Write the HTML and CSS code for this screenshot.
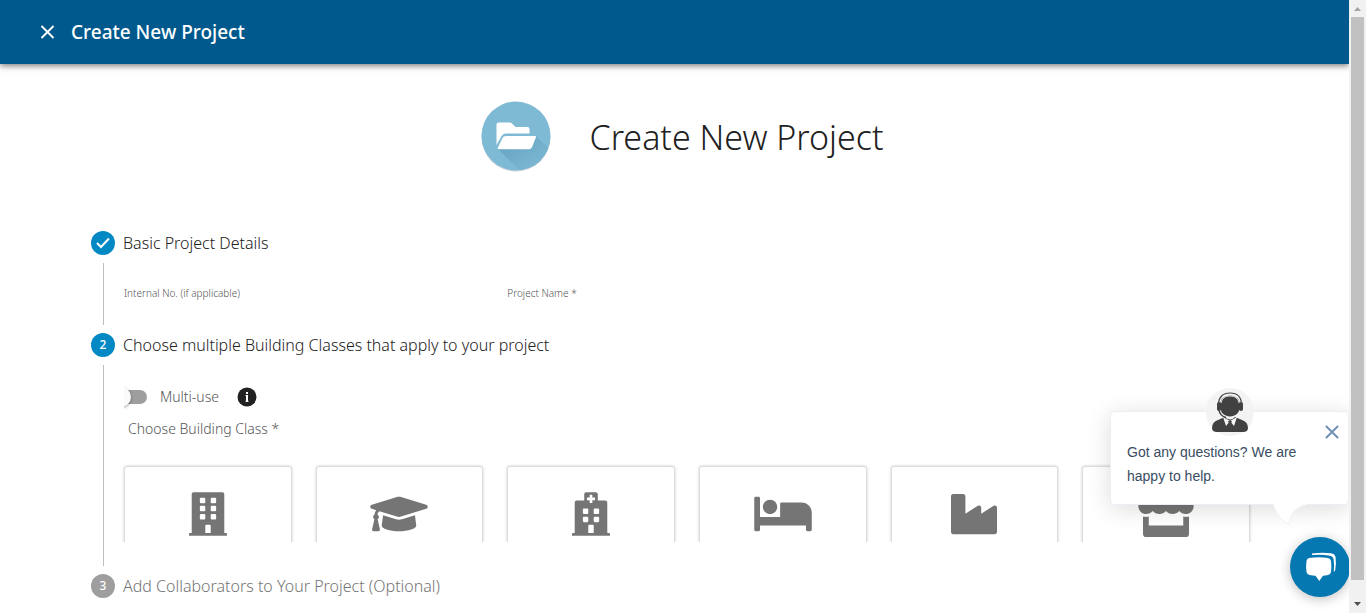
FILE: index.html
```html
<!DOCTYPE html>
<html lang="en">
<head>
<meta charset="utf-8">
<meta name="viewport" content="width=device-width, initial-scale=1">
<title>Create New Project</title>
<link rel="stylesheet" href="styles.css">
</head>
<body>
<div class="app">
  <div class="page">
    <header class="topbar">
      <button class="icon-button" type="button" aria-label="Close">
        <svg width="16" height="16" viewBox="0 0 16 16"><path d="M1.500 2l12 12M13.500 2l-12 12" stroke="#fff" stroke-width="1.800" fill="none"/></svg>
      </button>
      <span class="topbar-title">Create New Project</span>
    </header>

    <main class="content">
      <div class="hero">
        <svg class="hero-icon" width="70" height="72" viewBox="0 0 70 72" aria-hidden="true">
          <defs>
            <clipPath id="disc"><circle cx="35" cy="35" r="34.5"/></clipPath>
            <linearGradient id="shade" x1="0.2" y1="0.2" x2="0.75" y2="0.75"><stop offset="0" stop-color="#68a7c4"/><stop offset="1" stop-color="#7fbad5"/></linearGradient>
          </defs>
          <circle cx="35" cy="36" r="34.500" fill="#cbd3d7"/>
          <circle cx="35" cy="35" r="34.500" fill="#7fbad5"/>
          <path d="M17 48L45 76H82V62L55 35z" fill="url(#shade)" clip-path="url(#disc)"/>
          <path d="M15.500 44V23.500q0-2 2-2h11q1.500 0 2.500 1l3.500 3.500h12q2 0 2 2v4.500H25q-2.500 0-4 2z" fill="#fff"/>
          <path d="M25 35h29q1.500 0 1 1.300l-4 10q-.8 2-3 2H18q-2 0-1.200-1.600l4.700-9.700q1-2 3.500-2z" fill="#fff"/>
        </svg>
        <h1 class="hero-title">Create New Project</h1>
      </div>

      <ol class="stepper">
        <li class="step">
          <div class="step-head">
            <span class="badge"><svg width="14" height="12" viewBox="0 0 14 12"><path d="M1 6l4 4 8-8.500" stroke="#fff" stroke-width="2" fill="none"/></svg></span>
            <h2 class="step-title">Basic Project Details</h2>
          </div>
          <div class="step-body">
            <div class="fields">
              <div class="field"><label for="internal-no">Internal No. (if applicable)</label><input id="internal-no" type="text"></div>
              <div class="field"><label for="project-name">Project Name *</label><input id="project-name" type="text" required></div>
            </div>
          </div>
        </li>
        <li class="step">
          <div class="step-head">
            <span class="badge">2</span>
            <h2 class="step-title">Choose multiple Building Classes that apply to your project</h2>
          </div>
          <div class="step-body">
            <div class="options">
              <span class="switch"><input id="multi-use" type="checkbox" role="switch"></span>
              <label class="option-label" for="multi-use">Multi-use</label>
              <button class="icon-button" type="button" aria-label="About multi-use">
                <svg width="20" height="20" viewBox="0 0 20 20"><circle cx="10" cy="10" r="9.500" fill="#212121"/><rect x="9" y="5" width="2" height="2" fill="#fff"/><path d="M8.500 8.500H10V14M8.500 14.300h3" stroke="#fff" stroke-width="1" fill="none"/><rect x="9" y="8" width="2" height="6.500" fill="#fff"/></svg>
              </button>
            </div>
            <p class="cards-label" id="cards-label">Choose Building Class *</p>
            <div class="cards" role="group" aria-labelledby="cards-label">
              <button class="card" type="button" aria-label="Office">
                <svg width="38" height="44" viewBox="0 0 448 512"><path fill-rule="evenodd" d="M436 480h-20V24c0-13-11-24-24-24H56C43 0 32 11 32 24v456H12c-7 0-12 5-12 12v20h448v-20c0-7-5-12-12-12zM128 76q0-12 12-12h40q12 0 12 12v40q0 12-12 12h-40q-12 0-12-12zm128 0q0-12 12-12h40q12 0 12 12v40q0 12-12 12h-40q-12 0-12-12zM128 172q0-12 12-12h40q12 0 12 12v40q0 12-12 12h-40q-12 0-12-12zm128 0q0-12 12-12h40q12 0 12 12v40q0 12-12 12h-40q-12 0-12-12zM128 268q0-12 12-12h40q12 0 12 12v40q0 12-12 12h-40q-12 0-12-12zm128 0q0-12 12-12h40q12 0 12 12v40q0 12-12 12h-40q-12 0-12-12zM192 396q0-12 12-12h40q12 0 12 12v84h-64z"/></svg>
              </button>
              <button class="card" type="button" aria-label="Education">
                <svg width="58" height="46" viewBox="0 0 640 512"><path d="M622.340 153.200L343.400 67.500c-15.200-4.670-31.600-4.670-46.790 0L17.660 153.200c-23.540 7.230-23.540 38.360 0 45.590l48.630 14.940c-10.670 13.190-17.230 29.280-17.880 46.900C38.780 266.150 32 276.110 32 288c0 10.780 5.680 19.850 13.860 25.650L20.330 428.530C18.110 438.520 25.710 448 35.940 448h56.110c10.240 0 17.840-9.480 15.620-19.470L82.140 313.650C90.320 307.850 96 298.780 96 288c0-11.570-6.470-21.250-15.660-26.870.76-15.020 8.440-28.300 20.690-36.720L296.600 284.500c9.060 2.780 26.440 6.250 46.790 0l278.950-85.700c23.550-7.240 23.550-38.360 0-45.600zM352.790 315.090c-28.530 8.760-52.840 3.920-65.590 0l-145.020-44.550L128 384c0 35.350 85.960 64 192 64s192-28.650 192-64l-14.180-113.470-145.030 44.560z"/></svg>
              </button>
              <button class="card" type="button" aria-label="Health care">
                <svg width="38" height="44" viewBox="0 0 448 512"><path fill-rule="evenodd" d="M448 492v20H0v-20q0-12 12-12h20V120q0-24 24-24h88V24q0-24 24-24h112q24 0 24 24v72h88q24 0 24 24v360h20q12 0 12 12zM128 204q0-12 12-12h40q12 0 12 12v40q0 12-12 12h-40q-12 0-12-12zm128 0q0-12 12-12h40q12 0 12 12v40q0 12-12 12h-40q-12 0-12-12zM128 300q0-12 12-12h40q12 0 12 12v40q0 12-12 12h-40q-12 0-12-12zm128 0q0-12 12-12h40q12 0 12 12v40q0 12-12 12h-40q-12 0-12-12zM192 396q0-12 12-12h40q12 0 12 12v84h-64zM182 94h26v26q0 6 6 6h20q6 0 6-6V94h26q6 0 6-6V68q0-6-6-6h-26V36q0-6-6-6h-20q-6 0-6 6v26h-26q-6 0-6 6v20q0 6 6 6z"/></svg>
              </button>
              <button class="card" type="button" aria-label="Lodging">
                <svg width="58" height="46" viewBox="0 0 640 512"><path d="M176 256c44 0 80-36 80-80s-36-80-80-80-80 36-80 80 36 80 80 80zm352-128H304c-9 0-16 7-16 16v144H64V80c0-9-7-16-16-16H16C7 64 0 71 0 80v352c0 9 7 16 16 16h32c9 0 16-7 16-16v-48h512v48c0 9 7 16 16 16h32c9 0 16-7 16-16V240c0-62-50-112-112-112z"/></svg>
              </button>
              <button class="card" type="button" aria-label="Industrial">
                <svg width="46" height="46" viewBox="0 0 512 512"><path d="M475 164L336 252v-68c0-19-21-30-37-20L160 252V56c0-13-11-24-24-24H24C11 32 0 43 0 56v400c0 13 11 24 24 24h464c13 0 24-11 24-24V184c0-19-21-30-37-20z"/></svg>
              </button>
              <button class="card" type="button" aria-label="Retail">
                <svg width="56" height="46" viewBox="0 0 616 512"><path d="M602 118.600L537.100 15C531.300 5.700 521 0 510 0H106C95 0 84.700 5.700 78.900 15L14 118.600c-33.500 53.500-3.800 127.900 58.800 136.400 4.500.6 9.100.9 13.700.9 29.600 0 55.800-13 73.800-33.100 18 20.100 44.300 33.100 73.800 33.100 29.600 0 55.800-13 73.800-33.100 18 20.100 44.300 33.100 73.800 33.100 29.600 0 55.800-13 73.800-33.100 18.100 20.100 44.300 33.100 73.800 33.100 4.700 0 9.200-.3 13.700-.9 62.800-8.400 92.600-82.800 59-136.400zM529.500 288c-10 0-19.900-1.500-29.500-3.800V384H116v-99.800c-9.600 2.200-19.500 3.800-29.500 3.800-6 0-12.100-.4-18-1.200-5.600-.8-11.100-2.100-16.400-3.600V480c0 17.700 14.300 32 32 32h448c17.700 0 32-14.300 32-32V283.200c-5.400 1.600-10.800 2.900-16.400 3.600-6.100.8-12.100 1.200-18.200 1.200z"/></svg>
              </button>
            </div>
          </div>
        </li>
        <li class="step step-pending">
          <div class="step-head">
            <span class="badge">3</span>
            <h2 class="step-title">Add Collaborators to Your Project (Optional)</h2>
          </div>
        </li>
      </ol>
    </main>

    <aside class="chat">
      <div class="chat-popup">
        <svg class="chat-avatar" width="48" height="48" viewBox="0 0 48 48" aria-hidden="true">
          <circle cx="24" cy="24" r="24" fill="#f3f3f3"/>
          <path d="M6 40q0-6 6-8l7-3q5 5 10 0l7 3q6 2 6 8 0 4-5 4H11q-5 0-5-4z" fill="#414141"/>
          <path d="M17 29l3 9 4-5 4 5 3-9-7 4z" fill="#f6f6f6"/><path d="M22 33h4l-1 2 2 7h-6l2-7z" fill="#414141"/>
          <path d="M14 18C14 11 18 7.500 24 7.500S34 11 34 18 29 28.500 24 28.500 14 25 14 18z" fill="#414141"/>
          <path d="M12.500 17C12.500 9 17 5 24 5s11.500 4 11.500 12" stroke="#414141" stroke-width="1.200" fill="none"/>
          <path d="M15 15C16 10 19 8 24 8s8 2 9 7" stroke="#eee" stroke-width="1" fill="none"/>
          <rect x="11" y="14" width="4" height="9" rx="2" fill="#414141"/><rect x="33" y="14" width="4" height="9" rx="2" fill="#414141"/>
          <path d="M13 22q1 6 7 7.500" stroke="#414141" stroke-width="1.500" fill="none"/>
        </svg>
        <p class="chat-text">Got any questions? We are happy to help.</p>
        <button class="icon-button chat-close" type="button" aria-label="Dismiss">
          <svg width="14" height="14" viewBox="0 0 14 14"><path d="M1.500 1.500l11 11M12.500 1.500l-11 11" stroke="#7190b7" stroke-width="2" stroke-linecap="round" fill="none"/></svg>
        </button>
        <svg class="chat-tail" width="36" height="22" viewBox="0 0 36 22" aria-hidden="true"><path d="M0 0q4 14 16 21 0-17 20-21z" fill="#fff"/><path d="M0 0q4 14 16 21 0-17 20-21" fill="none" stroke="#f0f0f3"/></svg>
      </div>
      <button class="chat-open" type="button" aria-label="Open chat">
        <svg width="34" height="32" viewBox="1 1 34 32"><path d="M7 8q10-1.600 19 0 2.500.4 3 3 .8 6 0 11-.5 2.600-3 3-2.500.5-5 .7L17.300 31l-3.800-5.200q-3-.2-6-.8-2.500-.4-3-3-.8-5.500 0-11 .4-2.600 2.500-3z" fill="#fff"/><path d="M10 3.500q10-1.500 19-.3 4 .6 4.600 4 .8 6.800-.4 12.800-.3 1.500-1.500 1.800.8-6.300-.1-12.300-.5-3.200-3.500-3.800-8-1.400-18.100-.6z" fill="#fff"/></svg>
      </button>
    </aside>
  </div>

  <div class="scrollbar" aria-hidden="true">
    <svg width="17" height="17" viewBox="0 0 17 17"><path d="M5 11h7L8.500 7z" fill="#a3a3a3"/></svg>
    <div class="scroll-thumb"></div>
    <svg width="17" height="17" viewBox="0 0 17 17"><path d="M5 6h7l-3.500 4z" fill="#505050"/></svg>
  </div>
</div>
</body>
</html>
```
FILE: styles.css
```css
* { box-sizing: border-box; }
body { margin: 0; background: #fff; color: #212121; font-family: "Noto Sans", "Open Sans", sans-serif; }
button { font: inherit; }
h1, h2, p, ol { margin: 0; padding: 0; }
svg { display: block; flex: none; }

.app { display: grid; grid-template-columns: minmax(0, 1fr) 17px; height: 100vh; overflow: hidden; }
.page { position: relative; display: flex; flex-direction: column; min-height: 0; overflow: hidden; }

.icon-button { display: flex; padding: 0; border: 0; background: none; cursor: pointer; }

.topbar { display: flex; align-items: center; gap: 15px; padding: 16px 40px; background: #00598c; color: #fff; box-shadow: 0 2px 6px rgba(0, 0, 0, .5); }
.topbar-title { font-size: 19px; line-height: 32px; font-weight: 500; }

.content { flex: 1; min-height: 0; }
.hero { display: flex; justify-content: center; align-items: center; gap: 38px; padding: 37px 0 58px; margin-right: -16px; }
.hero-title { font-size: 34px; line-height: 48px; font-weight: 300; }

.stepper { list-style: none; padding: 0 99px 0 91px; }
.step-head { display: flex; align-items: center; gap: 8px; line-height: 24px; }
.badge { display: flex; align-items: center; justify-content: center; width: 24px; height: 24px; border-radius: 50%; background: #0288c3; color: #fff; font-size: 12px; font-weight: 500; }
.step-title { font-size: 16px; font-weight: 300; }
.step-body { margin: 8px 0 8px 12px; padding-left: 20px; border-left: 1px solid #bdbdbd; }
.step-pending .badge { background: #9e9e9e; }
.step-pending .step-title { color: #757575; }

.fields { display: grid; grid-template-columns: repeat(3, minmax(0, 1fr)); gap: 24px; padding-top: 20px; }
.field { display: flex; flex-direction: column; color: #555; font-size: 10px; line-height: 20px; font-weight: 300; }
.field input { width: 100%; height: 22px; padding: 0; border: 0; outline: 0; background: transparent; font: inherit; }

.options { display: flex; align-items: center; padding-top: 20px; line-height: 24px; }
.switch { display: flex; align-items: center; width: 24px; height: 24px; overflow: hidden; margin-right: 12px; }
.switch input { appearance: none; flex: none; display: flex; align-items: center; width: 36px; height: 14px; margin: 0 0 0 -13px; border-radius: 7px; background: #9e9e9e; }
.switch input::before { content: ""; flex: none; width: 20px; height: 20px; border-radius: 50%; background: #fafafa; box-shadow: 0 1px 3px rgba(0, 0, 0, .4); }
.option-label { margin-right: 18px; color: #555; font-size: 14px; font-weight: 300; }
.cards-label { padding: 4px 0 0 4px; margin-bottom: 21px; color: #555; font-size: 14px; line-height: 32px; font-weight: 300; }
.cards { display: grid; grid-template-columns: repeat(6, minmax(0, 1fr)); gap: 24px; max-height: 78px; padding: 2px; margin: -2px; margin-bottom: 0; overflow: hidden; }
.card { display: flex; flex-direction: column; align-items: center; justify-content: flex-start; min-height: 130px; padding: 0; border: 1px solid #ddd; border-radius: 3px; background: #fff; box-shadow: 0 0 3px rgba(0, 0, 0, .2); fill: #757575; }
.card svg { height: 46px; margin-top: 24px; }
.step-body:has(.cards) { padding-bottom: 24px; }

.chat-popup { position: absolute; right: 0; bottom: 108px; width: 239px; padding: 28px 16px 16px; border: 1px solid #ebeef5; border-radius: 4px; background: #fff; box-shadow: 0 4px 24px rgba(0, 0, 0, .14); }
.chat-text { color: #394d63; font: 14px/24px "Liberation Sans", sans-serif; padding-right: 24px; }
.chat-avatar { position: absolute; top: -24px; left: 95px; }
.chat-close { position: absolute; top: 13px; right: 9px; }
.chat-tail { position: absolute; top: 100%; right: 39px; }
.chat-open { position: absolute; right: -1px; bottom: 16px; display: flex; align-items: center; justify-content: center; width: 60px; height: 60px; padding: 0; border: 0; border-radius: 50%; background: #0577b1; box-shadow: 0 2px 12px rgba(0, 0, 0, .25); cursor: pointer; }

.scrollbar { display: flex; flex-direction: column; align-items: center; background: #f1f1f1; }
.scroll-thumb { flex: 1; width: 13px; margin-bottom: 16px; background: #c1c1c1; }
```
